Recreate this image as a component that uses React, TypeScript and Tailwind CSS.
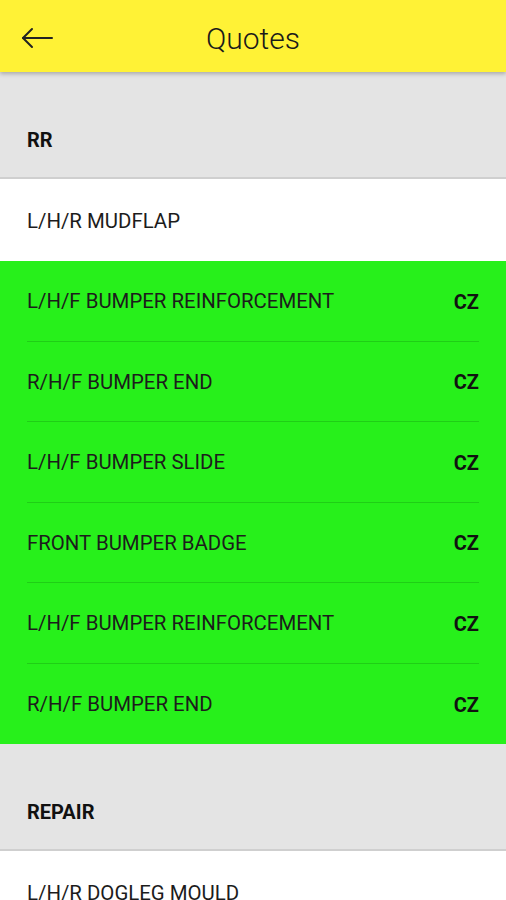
const items = [
  'L/H/F BUMPER REINFORCEMENT',
  'R/H/F BUMPER END',
  'L/H/F BUMPER SLIDE',
  'FRONT BUMPER BADGE',
  'L/H/F BUMPER REINFORCEMENT',
  'R/H/F BUMPER END',
];

const SectionHeader = ({ title }: { title: string }) => (
  <div className="h-[107px] bg-[#e4e4e4] border-b-2 border-[#cfcfcf] flex items-end px-[27px] pb-[26px]">
    <span className="text-[20px] leading-[22px] font-bold text-[#111]">{title}</span>
  </div>
);

export default function App() {
  return (
    <div className="w-[506px] h-[900px] overflow-hidden bg-[#e4e4e4]" style={{ fontFamily: 'Roboto, "Noto Sans", sans-serif' }}>
      <header className="relative z-10 h-[72px] bg-[#fff236] shadow-[0_2px_4px_rgba(0,0,0,0.25)] flex items-center pt-[4px]">
        <button className="ml-[20px] w-[34px] h-[34px] flex items-center justify-center">
          <svg width="34" height="24" viewBox="0 0 34 24" fill="none" stroke="#222" strokeWidth="2" strokeLinecap="round" strokeLinejoin="round">
            <path d="M3 12H32" />
            <path d="M12 3L3 12L12 21" />
          </svg>
        </button>
        <h1 className="absolute left-0 right-0 text-center text-[30px] font-light text-[#1a1a1a] pointer-events-none">Quotes</h1>
      </header>

      <SectionHeader title="RR" />

      <div className="bg-white h-[82px] flex items-center px-[27px] pt-[3px]">
        <span className="text-[20.4px] text-[#1c1c1c]">L/H/R MUDFLAP</span>
      </div>

      <div className="bg-[#27f01b]">
        {items.map((name, i) => (
          <div key={i} className="px-[27px]">
            <div className={`h-[80.5px] flex items-center justify-between pt-[2px] ${i < items.length - 1 ? 'border-b border-[#1fcf16]' : ''}`}>
              <span className="text-[20.4px] text-[#1c1c1c]">{name}</span>
              <span className="text-[20px] font-bold text-[#111]">CZ</span>
            </div>
          </div>
        ))}
      </div>

      <SectionHeader title="REPAIR" />

      <div className="bg-white h-[82px] flex items-center px-[27px] pt-[3px]">
        <span className="text-[20.4px] text-[#1c1c1c]">L/H/R DOGLEG MOULD</span>
      </div>
    </div>
  );
}
